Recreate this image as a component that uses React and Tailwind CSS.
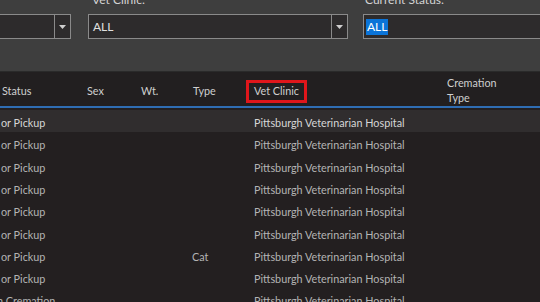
import React from "react";

const rows = [
  { status: "or Pickup", type: "", clinic: "Pittsburgh Veterinarian Hospital", sel: true },
  { status: "or Pickup", type: "", clinic: "Pittsburgh Veterinarian Hospital" },
  { status: "or Pickup", type: "", clinic: "Pittsburgh Veterinarian Hospital" },
  { status: "or Pickup", type: "", clinic: "Pittsburgh Veterinarian Hospital" },
  { status: "or Pickup", type: "", clinic: "Pittsburgh Veterinarian Hospital" },
  { status: "or Pickup", type: "", clinic: "Pittsburgh Veterinarian Hospital" },
  { status: "or Pickup", type: "Cat", clinic: "Pittsburgh Veterinarian Hospital" },
  { status: "or Pickup", type: "", clinic: "Pittsburgh Veterinarian Hospital" },
  { status: "n Cremation", type: "", clinic: "Pittsburgh Veterinarian Hospital", last: true },
];

function Arrow() {
  return (
    <div className="w-[16px] h-full border-l border-[#8a8a8a] flex items-center justify-center">
      <svg width="7" height="4" viewBox="0 0 7 4">
        <path d="M0 0 L7 0 L3.5 4 Z" fill="#cfcfcf" />
      </svg>
    </div>
  );
}

export default function App() {
  return (
    <div
      className="w-[540px] h-[302px] overflow-hidden bg-[#231f20] text-[10.8px]"
      style={{ fontFamily: "Lato, 'Liberation Sans', sans-serif" }}
    >
      {/* filter panel */}
      <div className="h-[72px] bg-[#3e3e3e] border-b border-[#2a2a2a] flex flex-col">
        <div className="-mt-[7px] h-[14px] flex text-[12px] text-[#d4d4d4] leading-[14px]">
          <div className="ml-[92px] w-[273px]">Vet Clinic:</div>
          <div>Current Status:</div>
        </div>
        <div className="mt-[7px] h-[25px] flex">
          <div className="-ml-[10px] w-[81px] h-full border border-[#8a8a8a] bg-[#2d2b2c] flex justify-end">
            <Arrow />
          </div>
          <div className="ml-[17px] w-[260px] h-full border border-[#8a8a8a] bg-[#2d2b2c] flex">
            <div className="flex-1 flex items-center pl-[4px] text-[#e0e0e0] text-[12px]">ALL</div>
            <Arrow />
          </div>
          <div className="ml-[15px] flex-1 -mr-[10px] h-full border border-[#8a8a8a] bg-[#2d2b2c] flex items-center pl-[2px]">
            <span className="bg-[#0b74d8] text-white text-[12px] leading-[16px] px-[1px]">ALL</span>
          </div>
        </div>
      </div>

      {/* header */}
      <div className="h-[34px] bg-[#221f20] flex items-center pt-[4px] text-[#cfcfcf]">
        <div className="ml-[2px] w-[85px]">Status</div>
        <div className="w-[54px]">Sex</div>
        <div className="w-[52px]">Wt.</div>
        <div className="w-[53px]">Type</div>
        <div className="w-[201px] h-[23px] flex items-center">
          <div className="h-[23px] px-[5px] border-[3px] border-[#e0161b] flex items-center">Vet Clinic</div>
        </div>
        <div className="leading-[15px] -mt-[2px]">
          <div>Cremation</div>
          <div>Type</div>
        </div>
      </div>
      <div className="h-[2px] bg-[#2f6db3]" />
      <div className="h-[2px]" />

      {/* rows */}
      <div className="flex flex-col">
        {rows.map((r, i) => (
          <div
            key={i}
            className={
              "h-[22.3px] flex items-center pt-[4px] " +
              (r.sel ? "bg-[#302d2e] text-[#d6d6d6]" : "text-[#b4b4b4]")
            }
          >
            <div className={r.last ? "-ml-[3px] w-[195px]" : "ml-[1px] w-[191px]"}>{r.status}</div>
            <div className="w-[62px]">{r.type}</div>
            <div>{r.clinic}</div>
          </div>
        ))}
      </div>
    </div>
  );
}
